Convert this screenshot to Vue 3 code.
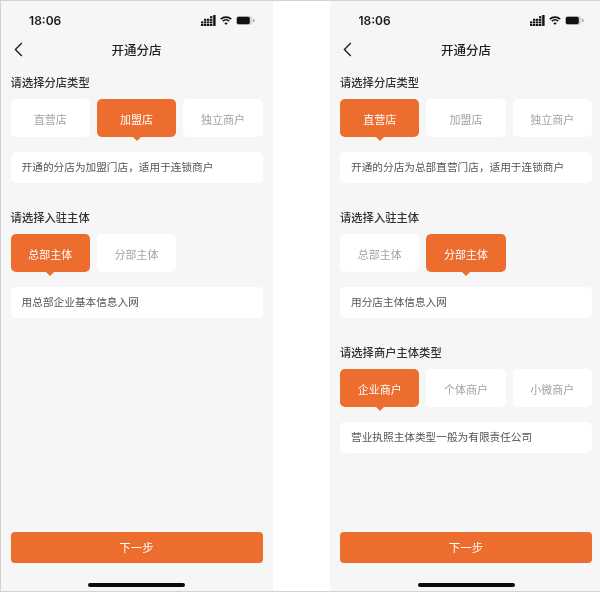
<script setup>
const phones = [
  {
    id: 'left',
    sections: [
      { title: '请选择分店类型', options: ['直营店', '加盟店', '独立商户'], active: 1, info: '开通的分店为加盟门店，适用于连锁商户' },
      { title: '请选择入驻主体', options: ['总部主体', '分部主体'], active: 0, info: '用总部企业基本信息入网' }
    ]
  },
  {
    id: 'right',
    sections: [
      { title: '请选择分店类型', options: ['直营店', '加盟店', '独立商户'], active: 0, info: '开通的分店为总部直营门店，适用于连锁商户' },
      { title: '请选择入驻主体', options: ['总部主体', '分部主体'], active: 1, info: '用分店主体信息入网' },
      { title: '请选择商户主体类型', options: ['企业商户', '个体商户', '小微商户'], active: 0, info: '营业执照主体类型一般为有限责任公司' }
    ]
  }
]
</script>

<template>
  <div class="page">
    <div v-for="phone in phones" :key="phone.id" class="phone" :class="phone.id">
      <div class="content">
        <div class="status">
          <span class="time">18:06</span>
          <div class="status-icons">
            <svg width="15" height="11" viewBox="0 0 15 11" fill="#111">
              <rect x="0" y="6.4" width="2.4" height="2" /><rect x="0" y="9" width="2.4" height="2" />
              <rect x="3" y="6.4" width="2.4" height="2" /><rect x="3" y="9" width="2.4" height="2" />
              <rect x="3" y="3.8" width="2.4" height="2" />
              <rect x="6" y="6.4" width="2.4" height="2" /><rect x="6" y="9" width="2.4" height="2" />
              <rect x="6" y="3.8" width="2.4" height="2" />
              <rect x="9" y="6.4" width="2.4" height="2" /><rect x="9" y="9" width="2.4" height="2" />
              <rect x="9" y="3.8" width="2.4" height="2" /><rect x="9" y="1.2" width="2.4" height="2" />
              <rect x="12.2" y="0" width="2.4" height="11" rx="0.5" />
            </svg>
            <svg width="12" height="9" viewBox="0 0 12 9" fill="none" stroke="#111" stroke-width="1.6">
              <path d="M0.8 3.2C3.8 0.4 8.2 0.4 11.2 3.2" />
              <path d="M2.8 5.2C4.7 3.5 7.3 3.5 9.2 5.2" />
              <path d="M6 9L4.2 7C5.3 6.2 6.7 6.2 7.8 7Z" fill="#111" stroke="none" />
            </svg>
            <svg width="19" height="9" viewBox="0 0 19 9">
              <rect x="0" y="0" width="16.5" height="9" rx="2.5" fill="#d8d8d8" />
              <rect x="0.8" y="0.8" width="13" height="7.4" rx="1.8" fill="#111" />
              <rect x="17.2" y="3" width="1.3" height="3" rx="0.6" fill="#999" />
            </svg>
          </div>
        </div>

        <div class="nav">
          <svg class="back" width="9" height="15" viewBox="0 0 9 15" fill="none" stroke="#222" stroke-width="1.4">
            <path d="M7.8 1L1.4 7.5L7.8 14" />
          </svg>
          <span class="nav-title">开通分店</span>
        </div>

        <section v-for="section in phone.sections" :key="section.title" class="section">
          <h3 class="section-title">{{ section.title }}</h3>
          <div class="options">
            <div
              v-for="(option, index) in section.options"
              :key="option"
              class="option"
              :class="{ active: index === section.active }"
            >{{ option }}</div>
          </div>
          <div class="info">{{ section.info }}</div>
        </section>

        <div class="footer">
          <button class="next">下一步</button>
          <div class="home-bar"></div>
        </div>
      </div>
    </div>
  </div>
</template>

<style scoped>
.page {
  box-sizing: border-box;
  width: 600px;
  height: 592px;
  display: flex;
  background: #fff;
  border-top: 1px solid #d2d2d2;
  border-bottom: 1px solid #d2d2d2;
  border-left: 1px solid #d2d2d2;
  font-family: "Noto Sans CJK SC", "Noto Sans", sans-serif;
  overflow: hidden;
  filter: blur(0.3px);
}
.phone {
  box-sizing: border-box;
  height: 100%;
  background: #f6f6f6;
}
.phone.left {
  width: 272px;
  padding-left: 9.6px;
  margin-right: 57px;
}
.phone.right {
  width: 270px;
  padding-left: 10px;
}
.content {
  width: 252px;
  height: 100%;
  display: flex;
  flex-direction: column;
}
.status {
  height: 34px;
  flex: none;
  display: flex;
  align-items: center;
  justify-content: space-between;
  padding: 4px 8px 0 18.5px;
  box-sizing: border-box;
}
.time {
  font-family: Inter, "Liberation Sans", sans-serif;
  font-size: 12px;
  font-weight: 600;
  color: #1a1a1a;
}
.status-icons {
  display: flex;
  align-items: center;
  gap: 4px;
}
.nav {
  position: relative;
  height: 28px;
  margin-bottom: 2px;
  flex: none;
  display: flex;
  align-items: center;
  justify-content: center;
}
.back {
  position: absolute;
  left: 3px;
  top: 7px;
}
.nav-title {
  font-size: 12.5px;
  font-weight: 500;
  color: #1f1f1f;
}
.section {
  margin-top: 9px;
  margin-bottom: 17px;
}
.section-title {
  margin: 0 0 9px;
  height: 16px;
  font-size: 11.3px;
  line-height: 16px;
  font-weight: 500;
  color: #333;
}
.options {
  display: grid;
  grid-template-columns: repeat(3, 1fr);
  gap: 7px;
}
.option {
  position: relative;
  height: 38px;
  line-height: 40px;
  text-align: center;
  border-radius: 5px;
  background: #fff;
  font-size: 11px;
  color: #a3a3a3;
}
.option.active {
  background: #ec6d2e;
  color: #fff;
}
.option.active::after {
  content: "";
  position: absolute;
  left: 50%;
  bottom: -4px;
  margin-left: -4px;
  border-left: 4px solid transparent;
  border-right: 4px solid transparent;
  border-top: 4px solid #ec6d2e;
}
.info {
  margin-top: 15px;
  height: 31px;
  line-height: 29.5px;
  padding-left: 11px;
  border-radius: 5px;
  background: #fff;
  font-size: 10.67px;
  color: #555;
}
.footer {
  margin-top: auto;
  display: flex;
  flex-direction: column;
  align-items: center;
}
.next {
  width: 100%;
  height: 31px;
  border: none;
  padding: 0 0 2px;
  border-radius: 4px;
  background: #ec6d2e;
  color: #fff;
  font-family: inherit;
  font-size: 11.5px;
}
.home-bar {
  width: 97px;
  height: 4px;
  margin: 20px 0 4px;
  border-radius: 2px;
  background: #0a0a0a;
}
</style>

<style>
html, body { margin: 0; background: #fff; }
</style>
